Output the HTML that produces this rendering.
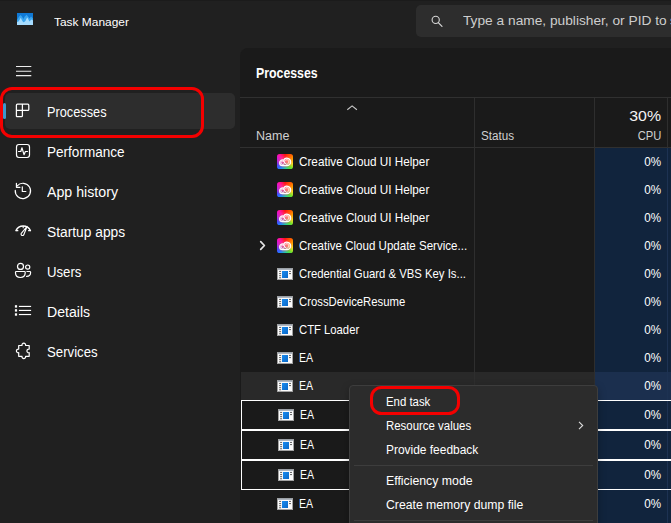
<!DOCTYPE html>
<html><head><meta charset="utf-8"><title>Task Manager</title>
<style>
html,body{margin:0;padding:0;background:#202020;}
body{width:671px;height:523px;position:relative;overflow:hidden;font-family:"Liberation Sans", sans-serif;}
.abs{position:absolute}
.t{position:absolute;white-space:nowrap;line-height:20px;display:block}
.ic{position:absolute;display:block}
.cc{position:absolute;left:277px;width:16px;height:15.4px;border-radius:2.6px;overflow:hidden;background:radial-gradient(ellipse 52% 46% at 48% 52%,rgba(255,70,120,.95) 0,rgba(255,70,110,.6) 50%,rgba(255,60,100,0) 100%),conic-gradient(from 0deg at 50% 50%,#ff1010 0deg,#ff5a00 40deg,#ffa800 75deg,#ffe020 105deg,#60e030 140deg,#20d0a0 175deg,#2080ff 215deg,#5040ff 245deg,#b020f0 275deg,#ff10b0 315deg,#ff1010 360deg)}
#topstrip{left:0;top:0;width:671px;height:1px;background:#1b1b1b}
#search{left:416px;top:5px;width:300px;height:32px;background:#2d2d2d;border-radius:5px}
#selbg{left:5px;top:93px;width:230px;height:36px;background:#2d2d2d;border-radius:5px}
#pill{left:3px;top:103px;width:3px;height:15.5px;background:#3b98cc;border-radius:2px}
#red1{left:0px;top:87px;width:198px;height:45px;border:3px solid #f40000;border-radius:12px}
#panel{left:240px;top:48px;width:440px;height:480px;background:#1a1a1a;border-top-left-radius:8px}
.hl{position:absolute;background:#303030;height:1px}
.vl{position:absolute;background:#2e2e2e;width:1px}
#cpu1{left:595px;top:148px;width:72px;height:375px;background:#11243d}
#cpu2{left:668px;top:148px;width:3px;height:375px;background:#11243d}
#cpusep{left:667px;top:148px;width:1px;height:375px;background:#1d3252}
#hover{left:241px;top:372px;width:430px;height:28px;background:#292929}
#hovercpu{left:595px;top:372px;width:76px;height:28px;background:#1b2f4e}
.sel{position:absolute;left:240.900px;width:440px;border:1.300px solid #fff;box-sizing:border-box;}
#menu{left:349px;top:385px;width:247px;height:160px;background:#2c2c2c;border:1px solid #3d3d3d;border-radius:4px;box-shadow:0 3px 8px rgba(0,0,0,.28)}
.msep{position:absolute;left:354px;width:239px;height:1px;background:#3d3d3d}
#red2{left:370.2px;top:386.2px;width:83.900px;height:23.300px;border:3.100px solid #f40000;border-radius:11.500px}
</style></head><body>
<div class="abs" id="topstrip"></div>
<svg width="0" height="0" style="position:absolute"><defs><linearGradient id="bl" x1="0" y1="0" x2="1" y2="1"><stop offset="0" stop-color="#1a8cf0"/><stop offset="1" stop-color="#0a68c8"/></linearGradient></defs></svg>
<!-- title bar -->
<svg class="ic" style="left:17px;top:13px" width="16" height="12" viewBox="0 0 16 12"><rect width="16" height="12" fill="#0f78d4"/><path d="M0 7 L2.2 3.5 L3.6 2 L5 3.6 L6.3 6 L7.8 3.4 L9.6 1.8 L11 3.4 L12.6 5.5 L14 3.5 L16 5.5 V12 H0z" fill="#3aa4ee"/><path d="M0 9 L1.5 8.5 L2.8 6.5 L3.8 4.8 L4.8 7 L6.2 9.2 L7.2 9 L8.4 8 L9.6 5.5 L10.4 4.6 L11.4 6.6 L12.4 8.4 L13.4 7.6 L14.6 6.4 L16 7.5 V12 H0z" fill="#a6dcff"/></svg>
<div class="abs" id="search"></div>
<svg class="ic" style="left:431px;top:15px" width="12" height="12" viewBox="0 0 12 12"><circle cx="4.7" cy="4.9" r="3.6" fill="none" stroke="#d8d8d8" stroke-width="1.1"/><path d="M7.3 7.6 L11 11.3" stroke="#d8d8d8" stroke-width="1.2" stroke-linecap="round"/></svg>
<!-- sidebar -->
<svg class="ic" style="left:15.5px;top:66px" width="16" height="11" viewBox="0 0 16 11"><path d="M0 .5H15.300M0 5.200H15.300M0 9.600H15.300" stroke="#ececec" stroke-width="1.050"/></svg>
<div class="abs" id="selbg"></div>
<div class="abs" id="pill"></div>
<!-- sidebar icons -->
<svg class="ic" style="left:15px;top:103px" width="16" height="16" viewBox="0 0 16 16" fill="none" stroke="#fff" stroke-width="1.250"><path d="M2.4 1.2H12.8Q13.8 1.2 13.8 2.2V6.400Q13.800 7.400 12.800 7.400H7.400V12.700Q7.400 13.700 6.400 13.700H2.400Q1.400 13.700 1.400 12.700V2.200Q1.400 1.200 2.400 1.200z M7.400 1.200V7.400 M1.400 7.400H7.400"/></svg>
<svg class="ic" style="left:15px;top:143px" width="16" height="16" viewBox="0 0 16 16" fill="none" stroke="#fff" stroke-width="1.2"><rect x="1.5" y="1.500" width="13" height="13" rx="2.4"/><path d="M3.5 8.5H5.8L7 4.8L9 11.700L10.400 8.500H12.500" stroke-linejoin="round" stroke-linecap="round"/></svg>
<svg class="ic" style="left:13px;top:181px" width="20" height="20" viewBox="0 0 20 20" fill="none" stroke="#fff" stroke-width="1.2" stroke-linecap="round" stroke-linejoin="round"><path d="M4.2 4.8A7.650 7.650 0 1 1 2.270 9.260"/><path d="M3.430 2.250V6.370H6.960"/><path d="M9.310 5.780V10.490H12.840"/></svg>
<svg class="ic" style="left:13px;top:222px" width="20" height="16" viewBox="0 0 20 16" fill="none" stroke="#fff" stroke-linecap="round" stroke-linejoin="round"><path d="M2.900 8.600A8.090 8.090 0 0 1 17.500 8.600" stroke-width="1.300"/><path d="M2.900 8.600H5.300M17.500 8.600H15.100M10.200 4.100V6.300" stroke-width="1.100" stroke-linecap="butt"/><path d="M14.100 4.300L10.900 12.500A1.450 1.450 0 1 1 8.300 11.300z" stroke-width="1.100"/></svg>
<svg class="ic" style="left:13px;top:261px" width="20" height="19" viewBox="0 0 20 19" fill="none" stroke="#fff" stroke-width="1.200" stroke-linejoin="round" stroke-linecap="round"><circle cx="7.500" cy="5.400" r="3"/><circle cx="14.700" cy="6.100" r="2.100"/><path d="M3.300 10.500H11.400Q12.200 10.500 12.200 11.300V11.800C12.200 14.600 10.200 16.500 7.350 16.500C4.500 16.500 2.500 14.600 2.500 11.800V11.300Q2.500 10.500 3.300 10.500z"/><path d="M13.900 10.500H16.800Q17.600 10.500 17.600 11.300V11.600C17.600 13.900 16 15.400 13.600 15.400"/></svg>
<svg class="ic" style="left:14px;top:304px" width="18" height="13" viewBox="0 0 18 13" fill="#fff"><rect x="4.900" y="1.850" width="12.200" height="1.150"/><rect x="4.900" y="5.850" width="12.200" height="1.150"/><rect x="4.900" y="9.950" width="12.200" height="1.150"/><rect x=".9" y="1.200" width="2.200" height="2.400"/><rect x=".9" y="5.200" width="2.200" height="2.400"/><rect x=".9" y="9.300" width="2.200" height="2.400"/></svg>
<svg class="ic" style="left:13px;top:341px" width="20" height="20" viewBox="0 0 20 20" fill="none" stroke="#fff" stroke-width="1.200" stroke-linejoin="round"><path d="M5.700 4.500H9A1.850 1.850 0 1 1 12.600 4.500H16.200V8.100A1.850 1.850 0 1 0 16.200 11.700V15.300H12.600A1.850 1.850 0 1 1 9 15.300H5.700V11.700A1.850 1.850 0 1 1 5.700 8.100z"/></svg>
<div class="abs" id="red1"></div>
<!-- panel -->
<div class="abs" id="panel"></div>
<div class="abs" id="hover"></div>
<div class="hl" style="left:240px;top:97.300px;width:431px"></div>
<div class="hl" style="left:240px;top:147px;width:431px"></div>
<div class="vl" style="left:474px;top:98px;height:425px"></div>
<div class="vl" style="left:594px;top:98px;height:425px"></div>
<div class="vl" style="left:667px;top:98px;height:50px"></div>
<svg class="ic" style="left:346px;top:104px" width="12" height="8" viewBox="0 0 12 8"><path d="M1.3 5.800L6.100 1.900L10.900 5.800" fill="none" stroke="#c8c8c8" stroke-width="1.1"/></svg>
<div class="abs" id="cpu1"></div><div class="abs" id="cpu2"></div><div class="abs" id="hovercpu"></div><div class="abs" id="cpusep"></div>
<div class="sel" style="top:399.800px;height:30.400px"></div>
<div class="sel" style="top:429.600px;height:30.400px"></div>
<div class="sel" style="top:459.900px;height:30px"></div>
<svg class="ic" style="left:259px;top:240px" width="8" height="11" viewBox="0 0 8 11"><path d="M1.700 1.700L5.400 5.500L1.700 9.300" fill="none" stroke="#e6e6e6" stroke-width="1.700" stroke-linecap="round" stroke-linejoin="round"/></svg>
<div class="cc" style="top:153.8px"><svg width="16" height="16" viewBox="0 0 16 16" fill="none" stroke="#fff" stroke-linecap="round"><path d="M2.700 8.900A2.700 2.700 0 0 1 6.600 6.300A3.700 3.700 0 0 1 13.600 7.900A3.700 3.700 0 0 1 9.900 11.600H5.400A2.700 2.700 0 0 1 2.700 8.900z" fill="#fff" fill-opacity=".14" stroke-width="1.250"/><path d="M7.900 9.600A2.300 2.300 0 1 1 9.900 10.300M6.700 10.200A1.700 1.700 0 1 1 6.900 7.700L9.300 10.200" stroke-width=".95" stroke-opacity=".95"/></svg></div>
<div class="cc" style="top:181.8px"><svg width="16" height="16" viewBox="0 0 16 16" fill="none" stroke="#fff" stroke-linecap="round"><path d="M2.700 8.900A2.700 2.700 0 0 1 6.600 6.300A3.700 3.700 0 0 1 13.600 7.900A3.700 3.700 0 0 1 9.900 11.600H5.400A2.700 2.700 0 0 1 2.700 8.900z" fill="#fff" fill-opacity=".14" stroke-width="1.250"/><path d="M7.900 9.600A2.300 2.300 0 1 1 9.900 10.300M6.700 10.200A1.700 1.700 0 1 1 6.900 7.700L9.300 10.200" stroke-width=".95" stroke-opacity=".95"/></svg></div>
<div class="cc" style="top:209.8px"><svg width="16" height="16" viewBox="0 0 16 16" fill="none" stroke="#fff" stroke-linecap="round"><path d="M2.700 8.900A2.700 2.700 0 0 1 6.600 6.300A3.700 3.700 0 0 1 13.600 7.900A3.700 3.700 0 0 1 9.900 11.600H5.400A2.700 2.700 0 0 1 2.700 8.900z" fill="#fff" fill-opacity=".14" stroke-width="1.250"/><path d="M7.900 9.600A2.300 2.300 0 1 1 9.900 10.300M6.700 10.200A1.700 1.700 0 1 1 6.900 7.700L9.300 10.200" stroke-width=".95" stroke-opacity=".95"/></svg></div>
<div class="cc" style="top:237.8px"><svg width="16" height="16" viewBox="0 0 16 16" fill="none" stroke="#fff" stroke-linecap="round"><path d="M2.700 8.900A2.700 2.700 0 0 1 6.600 6.300A3.700 3.700 0 0 1 13.600 7.900A3.700 3.700 0 0 1 9.900 11.600H5.400A2.700 2.700 0 0 1 2.700 8.900z" fill="#fff" fill-opacity=".14" stroke-width="1.250"/><path d="M7.900 9.600A2.300 2.300 0 1 1 9.900 10.300M6.700 10.200A1.700 1.700 0 1 1 6.900 7.700L9.300 10.200" stroke-width=".95" stroke-opacity=".95"/></svg></div>
<svg class="ic" style="left:277px;top:267.8px" width="16" height="12" viewBox="0 0 16 12"><rect x="0" y="0" width="16" height="12" fill="#a2a2a2"/><rect x="1" y="1.500" width="14" height="9.500" fill="#fbfbfb"/><rect x="1" y="0.700" width="14" height=".8" fill="#8d9cb0"/><rect x="5" y="3" width="6" height="7" fill="#0f7ad8"/><rect x="5" y="3" width="6" height="7" fill="url(#bl)"/>
<g fill="#6c6c6c"><rect x="2.100" y="2.900" width="2" height="1.100"/><rect x="2.100" y="5" width="2" height="1.100"/><rect x="2.100" y="7.100" width="2" height="1.100"/><rect x="2.100" y="9.200" width="2" height="1.100"/><rect x="12" y="2.900" width="2" height="1.100"/><rect x="12" y="5" width="2" height="1.100"/></g></svg>
<svg class="ic" style="left:277px;top:295.8px" width="16" height="12" viewBox="0 0 16 12"><rect x="0" y="0" width="16" height="12" fill="#a2a2a2"/><rect x="1" y="1.500" width="14" height="9.500" fill="#fbfbfb"/><rect x="1" y="0.700" width="14" height=".8" fill="#8d9cb0"/><rect x="5" y="3" width="6" height="7" fill="#0f7ad8"/><rect x="5" y="3" width="6" height="7" fill="url(#bl)"/>
<g fill="#6c6c6c"><rect x="2.100" y="2.900" width="2" height="1.100"/><rect x="2.100" y="5" width="2" height="1.100"/><rect x="2.100" y="7.100" width="2" height="1.100"/><rect x="2.100" y="9.200" width="2" height="1.100"/><rect x="12" y="2.900" width="2" height="1.100"/><rect x="12" y="5" width="2" height="1.100"/></g></svg>
<svg class="ic" style="left:277px;top:323.8px" width="16" height="12" viewBox="0 0 16 12"><rect x="0" y="0" width="16" height="12" fill="#a2a2a2"/><rect x="1" y="1.500" width="14" height="9.500" fill="#fbfbfb"/><rect x="1" y="0.700" width="14" height=".8" fill="#8d9cb0"/><rect x="5" y="3" width="6" height="7" fill="#0f7ad8"/><rect x="5" y="3" width="6" height="7" fill="url(#bl)"/>
<g fill="#6c6c6c"><rect x="2.100" y="2.900" width="2" height="1.100"/><rect x="2.100" y="5" width="2" height="1.100"/><rect x="2.100" y="7.100" width="2" height="1.100"/><rect x="2.100" y="9.200" width="2" height="1.100"/><rect x="12" y="2.900" width="2" height="1.100"/><rect x="12" y="5" width="2" height="1.100"/></g></svg>
<svg class="ic" style="left:277px;top:351.8px" width="16" height="12" viewBox="0 0 16 12"><rect x="0" y="0" width="16" height="12" fill="#a2a2a2"/><rect x="1" y="1.500" width="14" height="9.500" fill="#fbfbfb"/><rect x="1" y="0.700" width="14" height=".8" fill="#8d9cb0"/><rect x="5" y="3" width="6" height="7" fill="#0f7ad8"/><rect x="5" y="3" width="6" height="7" fill="url(#bl)"/>
<g fill="#6c6c6c"><rect x="2.100" y="2.900" width="2" height="1.100"/><rect x="2.100" y="5" width="2" height="1.100"/><rect x="2.100" y="7.100" width="2" height="1.100"/><rect x="2.100" y="9.200" width="2" height="1.100"/><rect x="12" y="2.900" width="2" height="1.100"/><rect x="12" y="5" width="2" height="1.100"/></g></svg>
<svg class="ic" style="left:277px;top:379.8px" width="16" height="12" viewBox="0 0 16 12"><rect x="0" y="0" width="16" height="12" fill="#a2a2a2"/><rect x="1" y="1.500" width="14" height="9.500" fill="#fbfbfb"/><rect x="1" y="0.700" width="14" height=".8" fill="#8d9cb0"/><rect x="5" y="3" width="6" height="7" fill="#0f7ad8"/><rect x="5" y="3" width="6" height="7" fill="url(#bl)"/>
<g fill="#6c6c6c"><rect x="2.100" y="2.900" width="2" height="1.100"/><rect x="2.100" y="5" width="2" height="1.100"/><rect x="2.100" y="7.100" width="2" height="1.100"/><rect x="2.100" y="9.200" width="2" height="1.100"/><rect x="12" y="2.900" width="2" height="1.100"/><rect x="12" y="5" width="2" height="1.100"/></g></svg>
<svg class="ic" style="left:278px;top:409.2px" width="16" height="12" viewBox="0 0 16 12"><rect x="0" y="0" width="16" height="12" fill="#a2a2a2"/><rect x="1" y="1.500" width="14" height="9.500" fill="#fbfbfb"/><rect x="1" y="0.700" width="14" height=".8" fill="#8d9cb0"/><rect x="5" y="3" width="6" height="7" fill="#0f7ad8"/><rect x="5" y="3" width="6" height="7" fill="url(#bl)"/>
<g fill="#6c6c6c"><rect x="2.100" y="2.900" width="2" height="1.100"/><rect x="2.100" y="5" width="2" height="1.100"/><rect x="2.100" y="7.100" width="2" height="1.100"/><rect x="2.100" y="9.200" width="2" height="1.100"/><rect x="12" y="2.900" width="2" height="1.100"/><rect x="12" y="5" width="2" height="1.100"/></g></svg>
<svg class="ic" style="left:278px;top:439.2px" width="16" height="12" viewBox="0 0 16 12"><rect x="0" y="0" width="16" height="12" fill="#a2a2a2"/><rect x="1" y="1.500" width="14" height="9.500" fill="#fbfbfb"/><rect x="1" y="0.700" width="14" height=".8" fill="#8d9cb0"/><rect x="5" y="3" width="6" height="7" fill="#0f7ad8"/><rect x="5" y="3" width="6" height="7" fill="url(#bl)"/>
<g fill="#6c6c6c"><rect x="2.100" y="2.900" width="2" height="1.100"/><rect x="2.100" y="5" width="2" height="1.100"/><rect x="2.100" y="7.100" width="2" height="1.100"/><rect x="2.100" y="9.200" width="2" height="1.100"/><rect x="12" y="2.900" width="2" height="1.100"/><rect x="12" y="5" width="2" height="1.100"/></g></svg>
<svg class="ic" style="left:278px;top:469.2px" width="16" height="12" viewBox="0 0 16 12"><rect x="0" y="0" width="16" height="12" fill="#a2a2a2"/><rect x="1" y="1.500" width="14" height="9.500" fill="#fbfbfb"/><rect x="1" y="0.700" width="14" height=".8" fill="#8d9cb0"/><rect x="5" y="3" width="6" height="7" fill="#0f7ad8"/><rect x="5" y="3" width="6" height="7" fill="url(#bl)"/>
<g fill="#6c6c6c"><rect x="2.100" y="2.900" width="2" height="1.100"/><rect x="2.100" y="5" width="2" height="1.100"/><rect x="2.100" y="7.100" width="2" height="1.100"/><rect x="2.100" y="9.200" width="2" height="1.100"/><rect x="12" y="2.900" width="2" height="1.100"/><rect x="12" y="5" width="2" height="1.100"/></g></svg>
<svg class="ic" style="left:277px;top:498.2px" width="16" height="12" viewBox="0 0 16 12"><rect x="0" y="0" width="16" height="12" fill="#a2a2a2"/><rect x="1" y="1.500" width="14" height="9.500" fill="#fbfbfb"/><rect x="1" y="0.700" width="14" height=".8" fill="#8d9cb0"/><rect x="5" y="3" width="6" height="7" fill="#0f7ad8"/><rect x="5" y="3" width="6" height="7" fill="url(#bl)"/>
<g fill="#6c6c6c"><rect x="2.100" y="2.900" width="2" height="1.100"/><rect x="2.100" y="5" width="2" height="1.100"/><rect x="2.100" y="7.100" width="2" height="1.100"/><rect x="2.100" y="9.200" width="2" height="1.100"/><rect x="12" y="2.900" width="2" height="1.100"/><rect x="12" y="5" width="2" height="1.100"/></g></svg>
<span class="t" id="title" style="left:54.17px;transform-origin:0 50%;top:12.36px;font-size:11px;color:#ffffff;font-weight:400;transform:scaleX(1.0840)">Task Manager</span>
<span class="t" id="tsearch" style="left:463.48px;transform-origin:0 50%;top:11.14px;font-size:13.5px;color:#cdcdcd;font-weight:400;transform:scaleX(1.0163)">Type a name, publisher, or PID to</span>
<span class="t" id="tsearch2" style="left:669.80px;transform-origin:0 50%;top:11.14px;font-size:13.5px;color:#cdcdcd;font-weight:400;transform:scaleX(0.9600)">search</span>
<span class="t" id="s0" style="left:46.61px;transform-origin:0 50%;top:102.37px;font-size:14px;color:#ffffff;font-weight:400;transform:scaleX(0.9120)">Processes</span>
<span class="t" id="s1" style="left:46.57px;transform-origin:0 50%;top:142.37px;font-size:14px;color:#ffffff;font-weight:400;transform:scaleX(0.9677)">Performance</span>
<span class="t" id="s2" style="left:47.40px;transform-origin:0 50%;top:182.37px;font-size:14px;color:#ffffff;font-weight:400;transform:scaleX(1.0135)">App history</span>
<span class="t" id="s3" style="left:46.51px;transform-origin:0 50%;top:222.37px;font-size:14px;color:#ffffff;font-weight:400;transform:scaleX(0.9836)">Startup apps</span>
<span class="t" id="s4" style="left:46.51px;transform-origin:0 50%;top:262.37px;font-size:14px;color:#ffffff;font-weight:400;transform:scaleX(0.9400)">Users</span>
<span class="t" id="s5" style="left:46.57px;transform-origin:0 50%;top:302.37px;font-size:14px;color:#ffffff;font-weight:400;transform:scaleX(1.0071)">Details</span>
<span class="t" id="s6" style="left:46.54px;transform-origin:0 50%;top:342.37px;font-size:14px;color:#ffffff;font-weight:400;transform:scaleX(0.9427)">Services</span>
<span class="t" id="h1" style="left:255.75px;transform-origin:0 50%;top:63.24px;font-size:14.4px;color:#ffffff;font-weight:700;transform:scaleX(0.8560)">Processes</span>
<span class="t" id="cname" style="left:255.60px;transform-origin:0 50%;top:126.03px;font-size:12px;color:#d0d0d0;font-weight:400;transform:scaleX(1.0427)">Name</span>
<span class="t" id="cstatus" style="left:480.71px;transform-origin:0 50%;top:126.03px;font-size:12px;color:#d0d0d0;font-weight:400;transform:scaleX(0.9718)">Status</span>
<span class="t" id="cpct" style="right:9.64px;transform-origin:100% 50%;top:106.04px;font-size:15px;color:#f4f4f4;font-weight:400;transform:scaleX(1.0581)">30%</span>
<span class="t" id="ccpu" style="right:9.93px;transform-origin:100% 50%;top:126.03px;font-size:12px;color:#d0d0d0;font-weight:400;transform:scaleX(0.9348)">CPU</span>
<span class="t" id="r0" style="left:298.69px;transform-origin:0 50%;top:151.84px;font-size:12.6px;color:#ffffff;font-weight:400;transform:scaleX(0.9307)">Creative Cloud UI Helper</span>
<span class="t" id="p0" style="right:9.48px;transform-origin:100% 50%;top:151.84px;font-size:12.6px;color:#ffffff;font-weight:400;transform:scaleX(0.9249)">0%</span>
<span class="t" id="r1" style="left:298.69px;transform-origin:0 50%;top:179.84px;font-size:12.6px;color:#ffffff;font-weight:400;transform:scaleX(0.9307)">Creative Cloud UI Helper</span>
<span class="t" id="p1" style="right:9.48px;transform-origin:100% 50%;top:179.84px;font-size:12.6px;color:#ffffff;font-weight:400;transform:scaleX(0.9249)">0%</span>
<span class="t" id="r2" style="left:298.69px;transform-origin:0 50%;top:207.84px;font-size:12.6px;color:#ffffff;font-weight:400;transform:scaleX(0.9307)">Creative Cloud UI Helper</span>
<span class="t" id="p2" style="right:9.48px;transform-origin:100% 50%;top:207.84px;font-size:12.6px;color:#ffffff;font-weight:400;transform:scaleX(0.9249)">0%</span>
<span class="t" id="r3" style="left:298.70px;transform-origin:0 50%;top:235.84px;font-size:12.6px;color:#ffffff;font-weight:400;transform:scaleX(0.9167)">Creative Cloud Update Service...</span>
<span class="t" id="p3" style="right:9.48px;transform-origin:100% 50%;top:235.84px;font-size:12.6px;color:#ffffff;font-weight:400;transform:scaleX(0.9249)">0%</span>
<span class="t" id="r4" style="left:298.70px;transform-origin:0 50%;top:263.84px;font-size:12.6px;color:#ffffff;font-weight:400;transform:scaleX(0.9000)">Credential Guard &amp; VBS Key Is...</span>
<span class="t" id="p4" style="right:9.48px;transform-origin:100% 50%;top:263.84px;font-size:12.6px;color:#ffffff;font-weight:400;transform:scaleX(0.9249)">0%</span>
<span class="t" id="r5" style="left:298.70px;transform-origin:0 50%;top:291.84px;font-size:12.6px;color:#ffffff;font-weight:400;transform:scaleX(0.8983)">CrossDeviceResume</span>
<span class="t" id="p5" style="right:9.48px;transform-origin:100% 50%;top:291.84px;font-size:12.6px;color:#ffffff;font-weight:400;transform:scaleX(0.9249)">0%</span>
<span class="t" id="r6" style="left:298.70px;transform-origin:0 50%;top:319.84px;font-size:12.6px;color:#ffffff;font-weight:400;transform:scaleX(0.8953)">CTF Loader</span>
<span class="t" id="p6" style="right:9.48px;transform-origin:100% 50%;top:319.84px;font-size:12.6px;color:#ffffff;font-weight:400;transform:scaleX(0.9249)">0%</span>
<span class="t" id="r7" style="left:298.79px;transform-origin:0 50%;top:347.84px;font-size:12.6px;color:#ffffff;font-weight:400;transform:scaleX(0.8384)">EA</span>
<span class="t" id="p7" style="right:9.48px;transform-origin:100% 50%;top:347.84px;font-size:12.6px;color:#ffffff;font-weight:400;transform:scaleX(0.9249)">0%</span>
<span class="t" id="r8" style="left:298.79px;transform-origin:0 50%;top:375.84px;font-size:12.6px;color:#ffffff;font-weight:400;transform:scaleX(0.8384)">EA</span>
<span class="t" id="p8" style="right:9.48px;transform-origin:100% 50%;top:375.84px;font-size:12.6px;color:#ffffff;font-weight:400;transform:scaleX(0.9249)">0%</span>
<span class="t" id="r9" style="left:299.79px;transform-origin:0 50%;top:404.84px;font-size:12.6px;color:#ffffff;font-weight:400;transform:scaleX(0.8384)">EA</span>
<span class="t" id="p9" style="right:9.48px;transform-origin:100% 50%;top:404.84px;font-size:12.6px;color:#ffffff;font-weight:400;transform:scaleX(0.9249)">0%</span>
<span class="t" id="r10" style="left:299.79px;transform-origin:0 50%;top:434.84px;font-size:12.6px;color:#ffffff;font-weight:400;transform:scaleX(0.8384)">EA</span>
<span class="t" id="p10" style="right:9.48px;transform-origin:100% 50%;top:434.84px;font-size:12.6px;color:#ffffff;font-weight:400;transform:scaleX(0.9249)">0%</span>
<span class="t" id="r11" style="left:299.79px;transform-origin:0 50%;top:464.84px;font-size:12.6px;color:#ffffff;font-weight:400;transform:scaleX(0.8384)">EA</span>
<span class="t" id="p11" style="right:9.48px;transform-origin:100% 50%;top:464.84px;font-size:12.6px;color:#ffffff;font-weight:400;transform:scaleX(0.9249)">0%</span>
<span class="t" id="r12" style="left:298.79px;transform-origin:0 50%;top:493.84px;font-size:12.6px;color:#ffffff;font-weight:400;transform:scaleX(0.8384)">EA</span>
<span class="t" id="p12" style="right:9.48px;transform-origin:100% 50%;top:493.84px;font-size:12.6px;color:#ffffff;font-weight:400;transform:scaleX(0.9249)">0%</span>
<!-- context menu -->
<div class="abs" id="menu"></div>
<div class="msep" style="top:465px"></div>
<div class="msep" style="top:520px"></div>
<svg class="ic" style="left:577px;top:420px" width="8" height="11" viewBox="0 0 8 11"><path d="M2 1.900L5.700 5.500L2 9.100" fill="none" stroke="#dcdcdc" stroke-width="1.100"/></svg>
<span class="t" id="m0" style="left:385.70px;transform-origin:0 50%;top:391.93px;font-size:12.3px;color:#ffffff;font-weight:400;transform:scaleX(0.9257)">End task</span>
<span class="t" id="m1" style="left:385.70px;transform-origin:0 50%;top:415.93px;font-size:12.3px;color:#ffffff;font-weight:400;transform:scaleX(0.9296)">Resource values</span>
<span class="t" id="m2" style="left:385.69px;transform-origin:0 50%;top:439.93px;font-size:12.3px;color:#ffffff;font-weight:400;transform:scaleX(0.9710)">Provide feedback</span>
<span class="t" id="m3" style="left:385.66px;transform-origin:0 50%;top:470.93px;font-size:12.3px;color:#ffffff;font-weight:400;transform:scaleX(1.0002)">Efficiency mode</span>
<span class="t" id="m4" style="left:386.40px;transform-origin:0 50%;top:494.93px;font-size:12.3px;color:#ffffff;font-weight:400;transform:scaleX(0.9947)">Create memory dump file</span>
<div class="abs" id="red2"></div>
</body></html>
